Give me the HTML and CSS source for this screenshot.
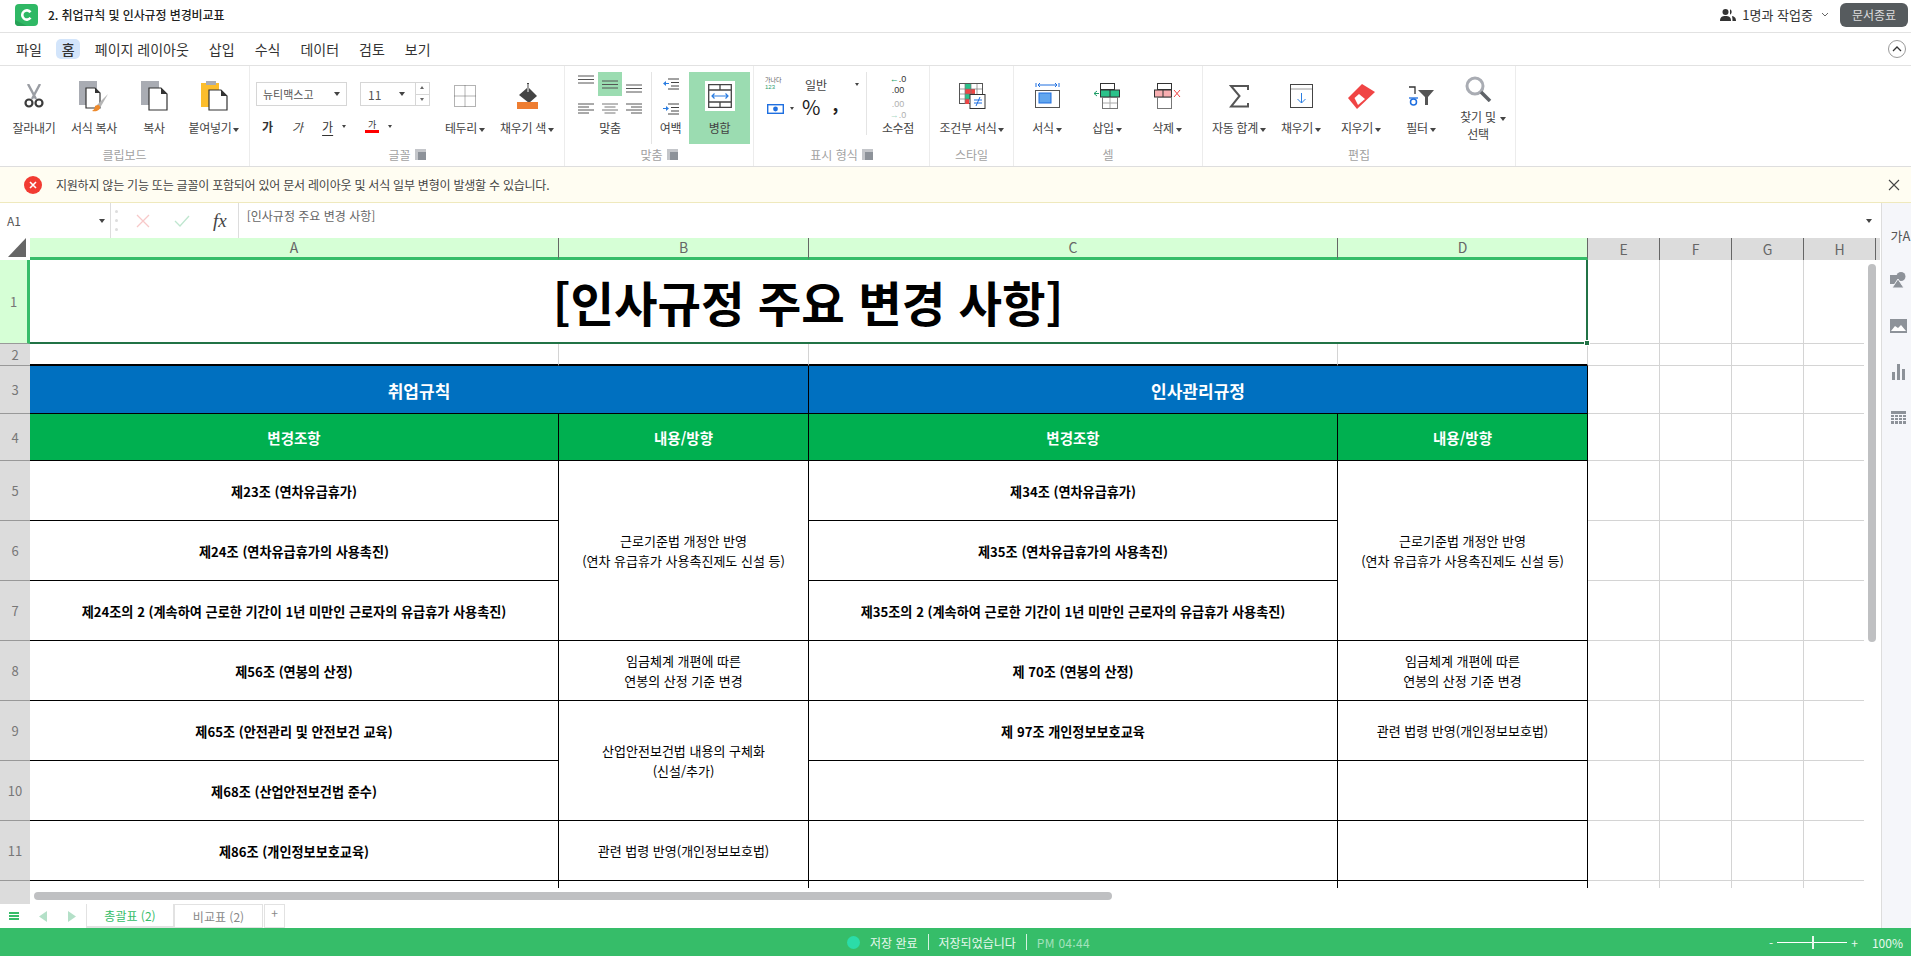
FILE: index.html
```html
<!DOCTYPE html>
<html lang="ko">
<head>
  <meta charset="UTF-8" />
  <meta name="viewport" content="width=device-width, initial-scale=1.0"/>
  <title>2. 취업규칙 및 인사규정 변경비교표</title>
  <link rel="stylesheet" href="styles.css">
</head>
<body>
  <div class="app">
    <header class="titlebar">
      <svg class="logo" width="23" height="22" viewBox="0 0 23 22"><rect width="23" height="22" rx="4" fill="#2fb865"/><path d="M0 16L12 22H4a4 4 0 0 1-4-4z" fill="#27a257"/><path d="M15.5 8.2a4.6 4.6 0 1 0 0 5.6" fill="none" stroke="#fff" stroke-width="2.6"/></svg>
      <span class="doc-name">2. 취업규칙 및 인사규정 변경비교표</span>
      <div class="presence">
        <svg width="16" height="12" viewBox="0 0 16 12"><circle cx="5.5" cy="3" r="3" fill="#333"/><path d="M0 12c0-4 2-5 5.5-5s5.500 1 5.500 5z" fill="#333"/><path d="M10 .3a3 3 0 0 1 0 5.400zM12 7c2.500.5 4 1.500 4 5h-3.500c0-2-.2-3.500-.5-5z" fill="#333"/></svg>
        <span>1명과 작업중</span>
        <svg width="8" height="5" viewBox="0 0 8 5"><path d="M1 1l3 3 3-3" fill="none" stroke="#666"/></svg>
      </div>
      <button class="close-doc">문서종료</button>
    </header>

    <nav class="menubar">
      <span>파일</span>
      <span class="menu-active">홈</span>
      <span>페이지 레이아웃</span>
      <span>삽입</span>
      <span>수식</span>
      <span>데이터</span>
      <span>검토</span>
      <span>보기</span>
      <svg class="collapse" width="18" height="18" viewBox="0 0 18 18"><circle cx="9" cy="9" r="8.500" fill="none" stroke="#999"/><path d="M5 11l4-4 4 4" fill="none" stroke="#333" stroke-width="1.300"/></svg>
    </nav>

    <section class="ribbon">
      <div class="group group-clip">
        <div class="items">
          <div class="tool w60">
            <div class="icon"><svg width="22" height="25" viewBox="0 0 22 25"><path d="M5 0l8 15M17 0L9 15" stroke="#9a9da3" stroke-width="2.400"/><circle cx="6" cy="19" r="3.500" fill="none" stroke="#3c3c3c" stroke-width="2.200"/><circle cx="16" cy="19" r="3.500" fill="none" stroke="#3c3c3c" stroke-width="2.200"/></svg></div>
            <div class="label">잘라내기</div>
          </div>
          <div class="tool w60">
            <div class="icon"><svg width="30" height="31" viewBox="0 0 30 31"><rect width="18" height="24" fill="#a9acb3"/><path d="M7 7h9l5 5v15H7z" fill="#fff" stroke="#333" stroke-width="1.200"/><path d="M16 7v5h5z" fill="#333"/><path d="M29 13l-11 11 3 3z" fill="#b5b5b5"/><path d="M16 25c3-2 5-1 5 1 0 3-3 5-8 4 2-1 3-3 3-5z" fill="#ee8a2c"/></svg></div>
            <div class="label">서식 복사</div>
          </div>
          <div class="tool w60">
            <div class="icon"><svg width="27" height="30" viewBox="0 0 27 30"><rect width="18" height="24" fill="#a9acb3"/><path d="M8 7h12l6 6v16H8z" fill="#fff" stroke="#333" stroke-width="1.200"/><path d="M20 7v6h6z" fill="#333"/></svg></div>
            <div class="label">복사</div>
          </div>
          <div class="tool w60">
            <div class="icon"><svg width="27" height="30" viewBox="0 0 27 30"><rect y="2" width="18" height="24" fill="#fcbd2c"/><rect x="5" width="10" height="4" fill="#a9acb3"/><path d="M8 9h12l6 6v14H8z" fill="#fff" stroke="#333" stroke-width="1.200"/><path d="M20 9v6h6z" fill="#333"/></svg></div>
            <div class="label">붙여넣기<i class="caret"></i></div>
          </div>
        </div>
        <div class="group-name">클립보드</div>
      </div>

      <div class="group group-font">
        <div class="items">
          <div class="font-col">
            <div class="font-selects">
              <div class="select select-font">뉴티맥스고<i class="caret"></i></div>
              <div class="select select-size">11<i class="caret"></i>
                <div class="spinner"><i class="up"></i><i class="down"></i></div>
              </div>
            </div>
            <div class="font-styles">
              <b class="fs-bold">가</b>
              <em class="fs-italic">가</em>
              <u class="fs-under">가</u>
              <i class="caret"></i>
              <span class="fs-color">가</span>
              <i class="caret"></i>
            </div>
          </div>
          <div class="tool w62">
            <div class="icon"><svg width="22" height="22" viewBox="0 0 22 22"><path d="M.5.5h21v21H.5zM11 .5v21M.5 11h21" fill="none" stroke="#666" stroke-dasharray="1 1"/></svg></div>
            <div class="label">테두리<i class="caret"></i></div>
          </div>
          <div class="tool w62">
            <div class="icon"><svg width="21" height="26" viewBox="0 0 21 26"><path d="M10 0h2v5l8 8-8 7-10-8 8-7z" fill="#444"/><path d="M11 1v8" stroke="#fff"/><rect y="19" width="21" height="7" fill="#ee7d31"/></svg></div>
            <div class="label">채우기 색<i class="caret"></i></div>
          </div>
        </div>
        <div class="group-name">글꼴<i class="launcher"></i></div>
      </div>

      <div class="group group-align">
        <div class="items">
          <div class="align-col">
            <div class="align-grid">
              <div class="align-btn"><svg width="16" height="9" viewBox="0 0 16 9"><path d="M0 1h16M0 4.500h16M0 8h16" stroke="#555"/></svg></div>
              <div class="align-btn on"><svg width="16" height="9" viewBox="0 0 16 9"><path d="M0 1h16M0 4.500h16M0 8h16" stroke="#555"/></svg></div>
              <div class="align-btn"><svg class="low" width="16" height="9" viewBox="0 0 16 9"><path d="M0 1h16M0 4.500h16M0 8h16" stroke="#555"/></svg></div>
              <div class="align-btn"><svg width="16" height="11" viewBox="0 0 16 11"><path d="M0 1h16M0 4h11M0 7h16M0 10h11" stroke="#555"/></svg></div>
              <div class="align-btn"><svg width="16" height="11" viewBox="0 0 16 11"><path d="M0 1h16M2.500 4h11M0 7h16M2.500 10h11" stroke="#777"/></svg></div>
              <div class="align-btn"><svg width="16" height="11" viewBox="0 0 16 11"><path d="M0 1h16M5 4h11M0 7h16M5 10h11" stroke="#555"/></svg></div>
            </div>
            <div class="label">맞춤</div>
          </div>
          <div class="divider"></div>
          <div class="tool w37">
            <div class="indent-icons">
              <svg width="16" height="12" viewBox="0 0 16 12"><path d="M5 1h11M8 4.500h8M8 8h8M5 11h11" stroke="#444"/><path d="M0 5.500l3-2.500v5z" fill="#2a7de1"/><path d="M2 5.500h4" stroke="#2a7de1"/></svg>
              <svg width="16" height="12" viewBox="0 0 16 12"><path d="M5 1h11M8 4.500h8M8 8h8M5 11h11" stroke="#444"/><path d="M6 5.500l-3-2.500v5z" fill="#2a7de1"/><path d="M0 5.500h4" stroke="#2a7de1"/></svg>
            </div>
            <div class="label">여백</div>
          </div>
          <div class="tool w61 tool-on">
            <div class="icon"><div class="merge-box"><svg width="24" height="24" viewBox="0 0 24 24"><path d="M.7.7h22.600v22.600H.7zM.7 6h22.600M.7 18h22.600M12 .7V6M12 18v5.300" fill="none" stroke="#444" stroke-width="1.300"/><path d="M4 12h16M6.500 9.500L4 12l2.500 2.500M17.500 9.500L20 12l-2.500 2.500" fill="none" stroke="#2a7de1" stroke-width="1.200"/></svg></div></div>
            <div class="label">병합</div>
          </div>
        </div>
        <div class="group-name">맞춤<i class="launcher"></i></div>
      </div>

      <div class="group group-num">
        <div class="items">
          <div class="num-col">
            <div class="num-row">
              <span class="num-fmt"><span>가나다</span><span class="num-fmt-digits">123</span></span>
              <span class="num-general">일반</span>
              <i class="caret"></i>
            </div>
            <div class="num-row num-row-second">
              <svg width="17" height="11" viewBox="0 0 17 11"><rect x=".7" y="1.700" width="15.600" height="8.600" fill="none" stroke="#1e6fe0" stroke-width="1.400"/><circle cx="8.500" cy="6" r="2.400" fill="#1e6fe0"/></svg>
              <i class="caret caret-num"></i>
              <span class="percent">%</span>
              <span class="comma">,</span>
            </div>
          </div>
          <div class="divider divider-num"></div>
          <div class="tool w62">
            <div class="decimals">
              <span class="dec-line"><b>←</b>.0</span>
              <span class="dec-line">.00</span>
              <span class="dec-line dec-off">.00</span>
              <span class="dec-line dec-off"><b>→</b>.0</span>
            </div>
            <div class="label">소수점</div>
          </div>
        </div>
        <div class="group-name">표시 형식<i class="launcher"></i></div>
      </div>

      <div class="group group-style">
        <div class="items">
          <div class="tool w84">
            <div class="icon"><svg width="27" height="26" viewBox="0 0 27 26"><rect x=".5" y=".5" width="23" height="20" fill="#fff" stroke="#555"/><rect x="6" y="1" width="6" height="5" fill="#2bc28a"/><rect x="6" y="6" width="10" height="5" fill="#f04444"/><rect x="6" y="11" width="6" height="5" fill="#2bc28a"/><rect x="6" y="16" width="4" height="5" fill="#f04444"/><path d="M6 1v20M12 1v20M18 1v10M1 6h22M1 11h15M1 16h10" stroke="#777" stroke-width=".7"/><rect x="11" y="11.500" width="15" height="14" fill="#fff" stroke="#333"/><path d="M15 17h8M15 20h8M21 14l-4 9" stroke="#1e6fe0"/></svg></div>
            <div class="label">조건부 서식<i class="caret"></i></div>
          </div>
        </div>
        <div class="group-name">스타일</div>
      </div>

      <div class="group group-cell">
        <div class="items">
          <div class="tool w60">
            <div class="icon"><svg width="25" height="26" viewBox="0 0 25 26"><path d="M1 0v4M24 0v4M3 2h19M5 0L3 2l2 2M20 0l2 2-2 2" fill="none" stroke="#1e6fe0"/><rect x=".5" y="7.500" width="24" height="17" fill="#fff" stroke="#555"/><rect x="4" y="10" width="12" height="10" fill="#62a6ee" stroke="#1e6fe0"/></svg></div>
            <div class="label">서식<i class="caret"></i></div>
          </div>
          <div class="tool w60">
            <div class="icon"><svg width="26" height="26" viewBox="0 0 26 26"><rect x="6.500" y=".5" width="14" height="6" fill="#fff" stroke="#333"/><rect x="6.500" y="7" width="19" height="7" fill="#2bc28a" stroke="#333"/><path d="M16 7v7" stroke="#333"/><rect x="8.500" y="14.500" width="15" height="11" fill="#fff" stroke="#777"/><path d="M16 15v10M9 20h14" stroke="#aaa"/><path d="M0 10.500h5M3 8l-3 2.500L3 13" fill="none" stroke="#1e9e68"/></svg></div>
            <div class="label">삽입<i class="caret"></i></div>
          </div>
          <div class="tool w60">
            <div class="icon"><svg width="27" height="26" viewBox="0 0 27 26"><rect x="3.500" y=".5" width="14" height="6" fill="#fff" stroke="#333"/><rect x=".5" y="7" width="17" height="7" fill="#f7aeb0" stroke="#333"/><path d="M9 7v7" stroke="#333"/><rect x="3.500" y="14.500" width="14" height="11" fill="#fff" stroke="#777"/><path d="M20 7l6 7M26 7l-6 7" stroke="#f04444"/></svg></div>
            <div class="label">삭제<i class="caret"></i></div>
          </div>
        </div>
        <div class="group-name">셀</div>
      </div>

      <div class="group group-edit">
        <div class="items">
          <div class="tool w64">
            <div class="icon"><svg width="20" height="23" viewBox="0 0 20 23"><path d="M19 5V1H2l8.500 10L2 21.500h17V18" fill="none" stroke="#555" stroke-width="2"/></svg></div>
            <div class="label">자동 합계<i class="caret"></i></div>
          </div>
          <div class="tool w60">
            <div class="icon"><svg width="23" height="24" viewBox="0 0 23 24"><rect x=".5" y=".5" width="22" height="23" fill="#fff" stroke="#444"/><path d="M1 5h21" stroke="#999"/><path d="M11.500 9v10M7.500 15l4 4 4-4" fill="none" stroke="#2a7de1"/></svg></div>
            <div class="label">채우기<i class="caret"></i></div>
          </div>
          <div class="tool w60">
            <div class="icon"><svg width="27" height="25" viewBox="0 0 27 25"><path d="M14 0l13 8L9 25 0 14z" fill="#f04444"/><path d="M6.500 14L11 10l6 5-7 6z" fill="#fff"/></svg></div>
            <div class="label">지우기<i class="caret"></i></div>
          </div>
          <div class="tool w60">
            <div class="icon"><svg width="26" height="20" viewBox="0 0 26 20"><path d="M1 1h6v7" fill="none" stroke="#333" stroke-width="1.300"/><path d="M1 12h9" stroke="#1e6fe0" stroke-width="1.300"/><circle cx="5.500" cy="16" r="3" fill="none" stroke="#1e6fe0" stroke-width="1.500"/><path d="M10 4h16l-6 7v8h-3v-8z" fill="#555"/></svg></div>
            <div class="label">필터<i class="caret"></i></div>
          </div>
          <div class="tool tool-two w54">
            <div class="icon"><svg width="27" height="26" viewBox="0 0 27 26"><circle cx="10" cy="10" r="8" fill="#fff" stroke="#a9acb3" stroke-width="3"/><path d="M16 16l9 9" stroke="#5f6368" stroke-width="3.500"/></svg></div>
            <div class="label">찾기 및<i class="caret caret-two"></i><br>선택</div>
          </div>
        </div>
        <div class="group-name">편집</div>
      </div>
    </section>

    <section class="notice">
      <svg width="18" height="18" viewBox="0 0 18 18"><circle cx="9" cy="9" r="9" fill="#f23b32"/><path d="M6 6l6 6M12 6l-6 6" stroke="#fff" stroke-width="1.600"/></svg>
      <span class="notice-text">지원하지 않는 기능 또는 글꼴이 포함되어 있어 문서 레이아웃 및 서식 일부 변형이 발생할 수 있습니다.</span>
      <svg class="notice-close" width="12" height="12" viewBox="0 0 12 12"><path d="M1 1l10 10M11 1L1 11" stroke="#444" stroke-width="1.100"/></svg>
    </section>

    <section class="formula">
      <div class="namebox">A1<i class="caret"></i></div>
      <div class="grip"><i></i><i></i><i></i></div>
      <svg class="fx-btn" width="14" height="14" viewBox="0 0 14 14"><path d="M1 1l12 12M13 1L1 13" stroke="#f7c9c9" stroke-width="1.300"/></svg>
      <svg class="fx-btn" width="16" height="12" viewBox="0 0 16 12"><path d="M1 6l5 5 9-10" fill="none" stroke="#bfe6cf" stroke-width="1.300"/></svg>
      <span class="fx-mark">fx</span>
      <div class="formula-input">[인사규정 주요 변경 사항]</div>
      <i class="caret formula-caret"></i>
    </section>

    <div class="workspace">
      <div class="sheet">
        <table class="grid">
          <colgroup>
            <col class="c-head"><col class="c-a"><col class="c-b"><col class="c-a"><col class="c-b">
            <col class="c-e"><col class="c-e"><col class="c-e"><col class="c-e"><col class="c-end">
          </colgroup>
          <thead>
            <tr class="r-cols">
              <th class="corner"><svg width="18" height="19" viewBox="0 0 18 19"><path d="M18 0v19H0z" fill="#666"/></svg></th>
              <th class="col-on">A</th><th class="col-on">B</th><th class="col-on">C</th><th class="col-on">D</th>
              <th>E</th><th>F</th><th>G</th><th>H</th><th class="col-end"></th>
            </tr>
          </thead>
          <tbody>
            <tr class="r1">
              <th class="row-on">1</th>
              <td colspan="4" class="title-cell">[인사규정 주요 변경 사항]<i class="handle"></i></td>
              <td></td><td></td><td></td><td></td><td></td>
            </tr>
            <tr class="r2">
              <th>2</th>
              <td class="over-black"></td><td class="over-black"></td><td class="over-black"></td><td class="over-black"></td>
              <td></td><td></td><td></td><td></td><td></td>
            </tr>
            <tr class="r3">
              <th>3</th>
              <td colspan="2" class="blue">취업규칙</td>
              <td colspan="2" class="blue">인사관리규정</td>
              <td></td><td></td><td></td><td></td><td></td>
            </tr>
            <tr class="r4">
              <th>4</th>
              <td class="green">변경조항</td><td class="green">내용/방향</td>
              <td class="green">변경조항</td><td class="green">내용/방향</td>
              <td></td><td></td><td></td><td></td><td></td>
            </tr>
            <tr class="r">
              <th>5</th>
              <td class="art">제23조 (연차유급휴가)</td>
              <td rowspan="3" class="txt">근로기준법 개정안 반영<br>(연차 유급휴가 사용촉진제도 신설 등)</td>
              <td class="art">제34조 (연차유급휴가)</td>
              <td rowspan="3" class="txt">근로기준법 개정안 반영<br>(연차 유급휴가 사용촉진제도 신설 등)</td>
              <td></td><td></td><td></td><td></td><td></td>
            </tr>
            <tr class="r">
              <th>6</th>
              <td class="art">제24조 (연차유급휴가의 사용촉진)</td>
              <td class="art">제35조 (연차유급휴가의 사용촉진)</td>
              <td></td><td></td><td></td><td></td><td></td>
            </tr>
            <tr class="r">
              <th>7</th>
              <td class="art">제24조의 2 (계속하여 근로한 기간이 1년 미만인 근로자의 유급휴가 사용촉진)</td>
              <td class="art">제35조의 2 (계속하여 근로한 기간이 1년 미만인 근로자의 유급휴가 사용촉진)</td>
              <td></td><td></td><td></td><td></td><td></td>
            </tr>
            <tr class="r">
              <th>8</th>
              <td class="art">제56조 (연봉의 산정)</td>
              <td class="txt">임금체계 개편에 따른<br>연봉의 산정 기준 변경</td>
              <td class="art">제 70조 (연봉의 산정)</td>
              <td class="txt">임금체계 개편에 따른<br>연봉의 산정 기준 변경</td>
              <td></td><td></td><td></td><td></td><td></td>
            </tr>
            <tr class="r">
              <th>9</th>
              <td class="art">제65조 (안전관리 및 안전보건 교육)</td>
              <td rowspan="2" class="txt">산업안전보건법 내용의 구체화<br>(신설/추가)</td>
              <td class="art">제 97조 개인정보보호교육</td>
              <td class="txt">관련 법령 반영(개인정보보호법)</td>
              <td></td><td></td><td></td><td></td><td></td>
            </tr>
            <tr class="r">
              <th>10</th>
              <td class="art">제68조 (산업안전보건법 준수)</td>
              <td class="art"></td>
              <td class="txt"></td>
              <td></td><td></td><td></td><td></td><td></td>
            </tr>
            <tr class="r">
              <th>11</th>
              <td class="art">제86조 (개인정보보호교육)</td>
              <td class="txt">관련 법령 반영(개인정보보호법)</td>
              <td class="art"></td>
              <td class="txt"></td>
              <td></td><td></td><td></td><td></td><td></td>
            </tr>
            <tr class="r">
              <th></th>
              <td class="art"></td><td class="txt"></td><td class="art"></td><td class="txt"></td>
              <td></td><td></td><td></td><td></td><td></td>
            </tr>
          </tbody>
        </table>
        <div class="vscroll"><i></i></div>
        <div class="hscroll"><i></i></div>
      </div>

      <aside class="sidepanel">
        <span class="side-text">가A</span>
        <svg width="16" height="16" viewBox="0 0 16 16"><rect y="3" width="9" height="9" fill="#8d9299"/><circle cx="11" cy="4.500" r="4.500" fill="#8d9299"/><path d="M8 7l6 9H2z" fill="#8d9299" stroke="#f5f6fa"/></svg>
        <svg width="17" height="14" viewBox="0 0 17 14"><rect width="17" height="14" fill="#8d9299"/><path d="M1 12l4-5 3 2 3-3 5 6z" fill="#fff"/></svg>
        <svg width="13" height="16" viewBox="0 0 13 16"><path d="M0 8h3v8H0zM5 0h3v16H5zM10 5h3v11h-3z" fill="#8d9299"/></svg>
        <svg width="15" height="13" viewBox="0 0 15 13"><path d="M0 0h15v3H0zM0 4h3v2H0zM4 4h3v2H4zM8 4h3v2H8zM12 4h3v2h-3zM0 7h3v2H0zM4 7h3v2H4zM8 7h3v2H8zM12 7h3v2h-3zM0 10h3v3H0zM4 10h3v3H4zM8 10h3v3H8zM12 10h3v3h-3z" fill="#8d9299"/></svg>
      </aside>
    </div>

    <div class="tabbar">
      <svg width="10" height="8" viewBox="0 0 10 8"><path d="M0 0h10v2H0zM0 3h10v2H0zM0 6h10v2H0z" fill="#36bd69"/></svg>
      <svg class="tab-prev" width="8" height="11" viewBox="0 0 8 11"><path d="M8 0v11L0 5.500z" fill="#b4e0c8"/></svg>
      <svg class="tab-next" width="8" height="11" viewBox="0 0 8 11"><path d="M0 0v11l8-5.500z" fill="#b4e0c8"/></svg>
      <div class="tab tab-on">총괄표 (2)</div>
      <div class="tab">비교표 (2)</div>
      <div class="tab tab-add">+</div>
    </div>

    <footer class="statusbar">
      <i class="status-dot"></i>
      <span>저장 완료</span>
      <i class="status-sep"></i>
      <span>저장되었습니다</span>
      <i class="status-sep"></i>
      <span class="status-time">PM 04:44</span>
      <div class="zoom">
        <span>-</span>
        <div class="zoom-track"><i></i></div>
        <span>+</span>
        <span class="zoom-val">100%</span>
      </div>
    </footer>
  </div>
</body>
</html>
```

FILE: styles.css
```css
* {
  box-sizing: border-box;
  font-family: "Noto Sans CJK KR", "Noto Sans", sans-serif;
}

html, body {
  margin: 0;
  padding: 0;
  height: 100%;
  overflow: hidden;
}

.app {
  display: flex;
  flex-direction: column;
  height: 956px;
  background: #fff;
  color: #333;
}

svg {
  display: block;
  flex: none;
}

i {
  font-style: normal;
}

/* top bar */
.titlebar {
  display: flex;
  align-items: center;
  height: 33px;
  padding: 0 3px 3px 15px;
  border-bottom: 1px solid #e2e2e2;
}

.doc-name {
  margin-left: 10px;
  font-size: 12px;
  font-weight: 500;
  letter-spacing: -0.1px;
  color: #222;
}

.presence {
  display: flex;
  align-items: center;
  margin-left: auto;
  font-size: 13px;
  color: #333;
}

.presence span {
  margin: 0 8px 0 6px;
}

.close-doc {
  width: 68px;
  height: 24px;
  margin-left: 11px;
  border: none;
  border-radius: 6px;
  background: #565b5e;
  color: #ddd;
  font-size: 12px;
}

.menubar {
  display: flex;
  align-items: center;
  gap: 20px;
  height: 33px;
  padding: 0 5px 0 16px;
  border-bottom: 1px solid #e2e2e2;
  font-size: 14px;
  color: #333;
}

.menu-active {
  width: 24px;
  height: 20px;
  margin: 0 -5.500px;
  border-radius: 5px;
  background: #d3e5fb;
  text-align: center;
  line-height: 20px;
  font-weight: 500;
}

.collapse {
  margin-left: auto;
}

/* ribbon */
.ribbon {
  display: flex;
  height: 101px;
  border-bottom: 1px solid #dedede;
}

.group {
  display: flex;
  flex-direction: column;
  padding-top: 6px;
  border-right: 1px solid #ececec;
}

.group-clip { width: 250px; padding-left: 4px; }
.group-font { width: 315px; padding-left: 6px; }
.group-align { width: 189px; padding-left: 9px; }
.group-num { width: 176px; padding-left: 11px; }
.group-style { width: 84px; }
.group-cell { width: 189px; padding-left: 3px; }
.group-edit { width: 313px; padding-left: 4px; }

.items {
  display: flex;
  height: 72px;
}

.group-name {
  display: flex;
  align-items: center;
  justify-content: center;
  height: 20px;
  margin-left: -12px;
  font-size: 12px;
  color: #a2a2a2;
}

.group-clip .group-name { margin-left: -4px; }
.group-font .group-name { margin-left: -6px; }
.group-align .group-name { margin-left: -9px; }
.group-num .group-name { margin-left: -11px; }
.group-style .group-name { margin-left: 0; }
.group-cell .group-name { margin-left: -3px; }
.group-edit .group-name { margin-left: -4px; }

.launcher {
  width: 11px;
  height: 11px;
  margin-left: 4px;
  background: linear-gradient(#8d9299, #8d9299) right bottom / 8px 8px no-repeat,
    linear-gradient(#c4c6ca, #c4c6ca);
}

.tool {
  display: flex;
  flex-direction: column;
  flex: none;
  height: 72px;
}

.w37 { width: 37px; }
.w54 { width: 54px; }
.w60 { width: 60px; }
.w61 { width: 61px; }
.w62 { width: 62px; }
.w64 { width: 64px; }
.w84 { width: 84px; }

.tool-on,
.align-btn.on {
  background: #9bdcb1;
}

.icon {
  display: flex;
  align-items: center;
  justify-content: center;
  height: 48px;
}

.label {
  height: 24px;
  font-size: 12px;
  line-height: 16px;
  text-align: center;
  letter-spacing: -0.3px;
  color: #444;
  white-space: nowrap;
}

.tool-two .icon {
  height: 38px;
  margin-top: -2px;
}

.tool-two .label {
  height: 36px;
  line-height: 17px;
}

.caret {
  display: inline-block;
  width: 0;
  height: 0;
  margin-left: 2px;
  border-left: 3px solid transparent;
  border-right: 3px solid transparent;
  border-top: 4px solid #444;
  vertical-align: middle;
}

.caret-two {
  margin-left: 4px;
  margin-right: -10px;
}

/* font group */
.font-col {
  display: flex;
  flex-direction: column;
  width: 178px;
  padding-top: 10px;
}

.font-selects {
  display: flex;
  gap: 13px;
}

.select {
  display: flex;
  align-items: center;
  height: 24px;
  border: 1px solid #d6d6d6;
  font-size: 12px;
  color: #555;
}

.select-font {
  justify-content: space-between;
  width: 91px;
  padding: 0 6px;
  font-size: 11px;
}

.select-size {
  position: relative;
  width: 70px;
  padding-left: 7px;
}

.select-size .caret {
  margin-left: 18px;
}

.spinner {
  display: flex;
  flex-direction: column;
  margin-left: auto;
  width: 14px;
  height: 100%;
  border-left: 1px solid #d6d6d6;
}

.spinner i {
  flex: 1;
  position: relative;
}

.spinner .up {
  border-bottom: 1px solid #d6d6d6;
}

.spinner .up::after,
.spinner .down::after {
  content: "";
  position: absolute;
  left: 4px;
  top: 3px;
  border-left: 2.500px solid transparent;
  border-right: 2.500px solid transparent;
}

.spinner .up::after { border-bottom: 3px solid #666; }
.spinner .down::after { border-top: 3px solid #666; }

.font-styles {
  display: flex;
  align-items: center;
  height: 24px;
  margin-top: 8px;
  padding-left: 6px;
  font-size: 12px;
  color: #333;
}

.fs-italic {
  margin-left: 19px;
  color: #444;
}

.fs-under {
  margin-left: 19px;
  text-underline-offset: 3px;
}

.fs-color {
  width: 14px;
  margin-left: 19px;
  font-size: 9px;
  line-height: 11px;
  text-align: center;
  border-bottom: 3px solid #f00;
}

.font-styles .caret {
  margin-left: 9px;
  border-left-width: 2.500px;
  border-right-width: 2.500px;
  border-top-width: 3px;
}

/* alignment group */
.align-col {
  width: 72px;
}

.align-grid {
  display: grid;
  grid-template-columns: repeat(3, 24px);
  grid-template-rows: repeat(2, 24px);
  height: 48px;
}

.align-btn {
  display: flex;
  align-items: center;
  justify-content: center;
}

.align-btn svg.low {
  margin-top: 8px;
}

.align-btn:nth-child(1) svg {
  margin-bottom: 9px;
}

.align-btn:nth-child(2) svg {
  margin-top: 1px;
}

.divider {
  width: 1px;
  height: 72px;
  margin: 0 0 0 5px;
  background: #e4e4e4;
}

.indent-icons {
  display: flex;
  flex-direction: column;
  align-items: center;
  gap: 13px;
  height: 48px;
  padding-top: 6px;
}

.merge-box {
  display: flex;
  align-items: center;
  justify-content: center;
  width: 30px;
  height: 30px;
  background: #fff;
}

/* number group */
.num-col {
  width: 102px;
}

.num-row {
  display: flex;
  align-items: center;
  height: 24px;
}

.num-row-second {
  padding-left: 2px;
}

.num-fmt {
  display: flex;
  flex-direction: column;
  width: 14px;
  font-size: 6px;
  line-height: 7px;
  color: #555;
  white-space: nowrap;
}

.num-fmt span {
  font-family: "Liberation Sans", "Noto Sans CJK KR", sans-serif;
}

.num-fmt-digits {
  color: #2f9e6f;
}

.num-general {
  margin-left: 26px;
  font-size: 12px;
  color: #444;
}

.num-row .caret {
  margin-left: 28px;
  border-left-width: 2.500px;
  border-right-width: 2.500px;
  border-top-width: 3px;
}

.num-row .caret-num {
  margin-left: 6px;
}

.percent {
  margin: -3px 0 0 8px;
  font-size: 20px;
  line-height: 24px;
  color: #222;
}

.comma {
  margin: -10px 0 0 12px;
  font-size: 18px;
  line-height: 20px;
  font-weight: 700;
  color: #222;
}

.divider-num {
  height: 63px;
  margin-left: 0;
}

.decimals {
  display: flex;
  flex-direction: column;
  align-items: center;
  height: 48px;
  padding-top: 2px;
  font-size: 9px;
  line-height: 11px;
  color: #333;
}

.dec-line {
  font-family: "Liberation Sans", sans-serif;
}

.dec-line b {
  font-family: "Liberation Sans", sans-serif;
  font-weight: 400;
  color: #1e9e68;
}

.dec-line:nth-child(3) {
  margin-top: 3px;
}

.dec-off {
  opacity: 0.4;
}

/* notice and formula bars */
.notice {
  display: flex;
  align-items: center;
  gap: 14px;
  height: 36px;
  padding: 0 11px 0 24px;
  background: #fffdf2;
  border-bottom: 1px solid #efe9bd;
}

.notice-text {
  font-size: 12px;
  letter-spacing: -0.23px;
  color: #444;
}

.notice-close {
  margin-left: auto;
}

.formula {
  display: flex;
  align-items: center;
  position: relative;
  height: 35px;
}

.namebox {
  display: flex;
  align-items: center;
  justify-content: space-between;
  width: 111px;
  height: 100%;
  padding: 0 5px 0 7px;
  border-right: 1px solid #ddd;
  font-size: 12px;
  color: #555;
}

.grip {
  display: flex;
  flex-direction: column;
  gap: 6px;
  margin-left: 4px;
}

.grip i {
  width: 3px;
  height: 3px;
  border-radius: 50%;
  background: #ddd;
}

.fx-btn {
  margin-left: 18px;
}

.fx-btn + .fx-btn {
  margin-left: 24px;
}

.fx-mark {
  margin-left: 23px;
  font-family: "Liberation Serif", serif;
  font-style: italic;
  font-size: 19px;
  color: #444;
}

.formula-input {
  align-self: stretch;
  margin-left: 11px;
  padding: 4px 0 0 8px;
  border-left: 1px solid #ddd;
  font-size: 12px;
  color: #666;
}

.formula-caret {
  margin-left: auto;
  margin-right: 39px;
}

/* sheet */
.workspace {
  display: flex;
  flex: none;
  height: 690px;
}

.sheet {
  position: relative;
  width: 1881px;
  height: 666px;
  overflow: hidden;
}

.grid {
  table-layout: fixed;
  width: 1880px;
  border-collapse: separate;
  border-spacing: 0;
}

.c-head { width: 30px; }
.c-a { width: 529px; }
.c-b { width: 250px; }
.c-e { width: 72px; }
.c-end { width: 4px; }

.grid th,
.grid td {
  padding: 0;
  text-align: center;
  vertical-align: middle;
}

.grid td {
  border-right: 1px solid #d4d4d4;
  border-bottom: 1px solid #d4d4d4;
}

.grid td:last-child {
  border-right: none;
}

.grid thead th {
  height: 22px;
  border-right: 1px solid #666;
  background: #dcdcdc;
  font-size: 14px;
  font-weight: 400;
  color: #666;
}

.grid thead .corner {
  border-right: none;
  background: #fff;
}

.corner svg {
  margin: 0 0 3px 8px;
}

.grid thead .col-on {
  background: #d6ffd6;
  border-bottom: 3px solid #36bd69;
  line-height: 19px;
}

.grid thead .col-end {
  border-right: none;
}

.grid tbody th {
  background: #dcdcdc;
  border-bottom: 1px solid #999;
  font-size: 13px;
  font-weight: 400;
  color: #777;
}

.grid tbody .row-on {
  background: #d6ffd6;
  border-right: 3px solid #36bd69;
}

.r1 { height: 84px; }
.r2 { height: 22px; }
.r3 { height: 48px; }
.r4 { height: 47px; }
.r { height: 60px; }

.grid .title-cell {
  position: relative;
  border: 2px solid #217346;
  border-left: none;
  border-top: none;
  font-size: 47.300px;
  font-weight: 700;
  color: #000;
}

.handle {
  position: absolute;
  right: -4px;
  bottom: -4px;
  width: 6px;
  height: 6px;
  background: #217346;
  border: 1px solid #fff;
}

.grid .over-black {
  border-bottom: 2px solid #000;
}

.grid .blue,
.grid .green,
.grid .art,
.grid .txt {
  border-right: 1px solid #000;
  border-bottom: 1px solid #000;
}

.grid .blue {
  padding-top: 2px;
  background: #0070c0;
  font-size: 17px;
  font-weight: 700;
  color: #fff;
}

.grid .green {
  background: #00b050;
  font-size: 14.500px;
  font-weight: 700;
  color: #fff;
}

.grid .art {
  padding-top: 1px;
  font-size: 13.150px;
  font-weight: 700;
  color: #000;
}

.grid .txt {
  padding-top: 1px;
  font-size: 13px;
  line-height: 20px;
  color: #000;
}

.vscroll {
  position: absolute;
  top: 22px;
  right: 1px;
  bottom: 0;
  width: 16px;
  background: #fff;
}

.vscroll i {
  position: absolute;
  top: 4px;
  left: 4px;
  width: 8px;
  height: 378px;
  border-radius: 4px;
  background: #bfc0c2;
}

.hscroll {
  position: absolute;
  left: 30px;
  right: 1px;
  bottom: 0;
  height: 16px;
  background: #fff;
}

.hscroll i {
  position: absolute;
  top: 4px;
  left: 4px;
  width: 1078px;
  height: 8px;
  border-radius: 4px;
  background: #bfc0c2;
}

.sidepanel {
  display: flex;
  flex-direction: column;
  align-items: center;
  flex: none;
  width: 30px;
  margin-top: -35px;
  padding: 25px 0 0 0;
  background: #f5f6fa;
  border-left: 1px solid #ddd;
}

.side-text {
  width: 30px;
  padding-left: 9px;
  font-size: 13px;
  line-height: 16px;
  color: #555;
  white-space: nowrap;
}

.sidepanel svg {
  margin-top: 31px;
  margin-left: 3px;
}

.sidepanel svg:nth-child(2) {
  margin-top: 28px;
}

/* tabs */
.tabbar {
  display: flex;
  align-items: center;
  flex: none;
  position: relative;
  width: 1881px;
  height: 24px;
  margin-top: -24px;
  padding-left: 9px;
  background: #fff;
}

.tab-prev { margin-left: 20px; }
.tab-next { margin-left: 21px; margin-right: 10px; }

.tab {
  display: flex;
  align-items: center;
  justify-content: center;
  width: 89px;
  height: 24px;
  border: 1px solid #e2e2e2;
  border-left-width: 1px;
  font-size: 12px;
  color: #888;
}

.tab-on {
  width: 88px;
  border-top: none;
  border-bottom-width: 2px;
  color: #36bd69;
}

.tab-add {
  align-items: flex-start;
  width: 21px;
  margin-left: 1px;
  font-size: 12px;
  line-height: 16px;
}

/* status bar */
.statusbar {
  display: flex;
  align-items: center;
  flex: none;
  height: 28px;
  padding: 0 8px 0 847px;
  background: #36bd69;
  font-size: 12px;
  color: #e8f8ee;
}

.status-dot {
  width: 13px;
  height: 13px;
  margin-right: 10px;
  border-radius: 50%;
  background: #2bdca8;
}

.status-sep {
  width: 1px;
  height: 16px;
  margin: 0 10px;
  background: #d5f2e0;
}

.status-time {
  letter-spacing: 0.3px;
  color: #a4e2bd;
}

.zoom {
  display: flex;
  align-items: center;
  margin-left: auto;
  gap: 4px;
}

.zoom-track {
  position: relative;
  width: 70px;
  height: 1px;
  background: #fff;
}

.zoom-track i {
  position: absolute;
  top: -6px;
  left: 35px;
  width: 2px;
  height: 13px;
  background: #e8f8ee;
}

.zoom-val {
  margin-left: 10px;
}
```
